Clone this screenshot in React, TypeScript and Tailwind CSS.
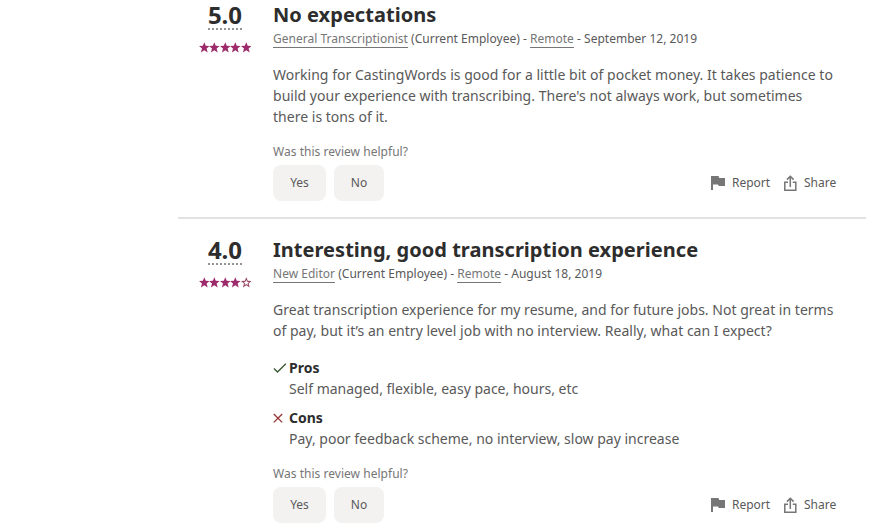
import type { ReactNode } from 'react';

type Review = {
  id: string;
  rating: number;
  title: string;
  role: string;
  location: string;
  date: string;
  // One entry per line of the review body.
  body: string[];
  pros?: string;
  cons?: string;
};

const REVIEWS: Review[] = [
  {
    id: 'no-expectations',
    rating: 5,
    title: 'No expectations',
    role: 'General Transcriptionist',
    location: 'Remote',
    date: 'September 12, 2019',
    body: [
      'Working for CastingWords is good for a little bit of pocket money. It takes patience to',
      "build your experience with transcribing. There's not always work, but sometimes",
      'there is tons of it.',
    ],
  },
  {
    id: 'interesting',
    rating: 4,
    title: 'Interesting, good transcription experience',
    role: 'New Editor',
    location: 'Remote',
    date: 'August 18, 2019',
    body: [
      'Great transcription experience for my resume, and for future jobs. Not great in terms',
      'of pay, but it’s an entry level job with no interview. Really, what can I expect?',
    ],
    pros: 'Self managed, flexible, easy pace, hours, etc',
    cons: 'Pay, poor feedback scheme, no interview, slow pay increase',
  },
];

export default function App() {
  return (
    <main className="h-[527px] overflow-hidden bg-white pl-[178px] pr-[13px] font-['Noto_Sans','Open_Sans',sans-serif] text-[#595959]">
      {REVIEWS.map((review) => (
        <ReviewCard key={review.id} review={review} />
      ))}
    </main>
  );
}

function ReviewCard({ review }: { review: Review }) {
  return (
    <article className="mb-4 flex border-b-2 border-[#e4e2e0] pb-4">
      <div className="flex w-[94px] shrink-0 flex-col items-center">
        <div className="h-[30px] border-b-2 border-dotted border-[#949494] text-2xl leading-[30px] font-bold text-[#2d2d2d]">
          {review.rating.toFixed(1)}
        </div>
        <Stars rating={review.rating} />
      </div>

      <div className="ml-px min-w-0 flex-1">
        <h2 className="text-xl leading-[30px] font-bold tracking-[0.03px] text-[#2d2d2d]">{review.title}</h2>
        <div className="text-xs leading-[18px] tracking-[0.015px] whitespace-nowrap">
          <MetaLink>{review.role}</MetaLink> (Current Employee) - <MetaLink>{review.location}</MetaLink> -{' '}
          {review.date}
        </div>

        <p className="mt-4 text-sm leading-[21px] tracking-[0.02px] whitespace-nowrap">
          {review.body.map((line) => (
            <span key={line} className="block">
              {line}
            </span>
          ))}
        </p>

        {review.pros && (
          <Verdict icon={<CheckIcon />} label="Pros" className="mt-4">
            {review.pros}
          </Verdict>
        )}
        {review.cons && (
          <Verdict icon={<CrossIcon />} label="Cons" className="mt-2">
            {review.cons}
          </Verdict>
        )}

        <div className="mt-4 text-xs leading-[18px] tracking-[0.03px] text-[#767676]">Was this review helpful?</div>
        <div className="mt-1 flex items-center justify-between pr-[29px] text-xs">
          <div className="flex gap-2">
            <button className="h-9 w-[53px] rounded-lg bg-[#f3f2f1]">Yes</button>
            <button className="h-9 w-[50px] rounded-lg bg-[#f3f2f1]">No</button>
          </div>
          <div className="flex items-center">
            <button className="flex items-center">
              <FlagIcon />
              <span className="ml-1.5 w-[39px] text-left">Report</span>
            </button>
            <button className="ml-[13px] flex items-center">
              <ShareIcon />
              <span className="ml-1.5 w-[33px] text-left">Share</span>
            </button>
          </div>
        </div>
      </div>
    </article>
  );
}

function MetaLink({ children }: { children: ReactNode }) {
  return (
    <a href="#" className="border-b border-[#767676] text-[#767676]">
      {children}
    </a>
  );
}

function Verdict({
  icon,
  label,
  className,
  children,
}: {
  icon: ReactNode;
  label: string;
  className: string;
  children: ReactNode;
}) {
  return (
    <div className={className}>
      <div className="flex items-center text-sm leading-[21px] font-bold text-[#2d2d2d]">
        <span className="w-4 shrink-0">{icon}</span>
        {label}
      </div>
      <div className="pl-4 text-sm leading-[21px] whitespace-nowrap">{children}</div>
    </div>
  );
}

const STAR_PATH = 'M5.5 0 7 3.8 11 4 7.9 6.6 9 10.6 5.5 8.4 2 10.6 3.1 6.6 0 4 4 3.8Z';

// The empty star is the same outline with a smaller one cut out of it.
const STAR_HOLE = 'M5.5 2.7 6.3 4.8 8.4 4.9 6.8 6.3 7.3 8.3 5.5 7.1 3.7 8.3 4.2 6.3 2.6 4.9 4.7 4.8Z';

function Stars({ rating }: { rating: number }) {
  return (
    <div className="mt-3 flex w-[53px]">
      {[1, 2, 3, 4, 5].map((n) => (
        <svg key={n} viewBox="0 0 11 11" className="h-[11px] min-w-0 flex-1">
          <path
            d={n <= rating ? STAR_PATH : `${STAR_PATH} ${STAR_HOLE}`}
            fill={n <= rating ? '#9d2b6b' : '#94405f'}
            fillRule="evenodd"
          />
        </svg>
      ))}
    </div>
  );
}

function CheckIcon() {
  return (
    <svg width="14" height="12" viewBox="0 0 14 12" fill="none" stroke="#3d5a35" strokeWidth="1.4">
      <path d="M1 6.5 4.5 10 12.8 1.8" />
    </svg>
  );
}

function CrossIcon() {
  return (
    <svg width="14" height="12" viewBox="0 0 14 12" fill="none" stroke="#963535" strokeWidth="1.3">
      <path d="M.8 2 9.2 10.4M9.2 2 .8 10.4" />
    </svg>
  );
}

function FlagIcon() {
  return (
    <svg width="15" height="14" viewBox="0 0 15 14" fill="#767676">
      <path d="M0 0H7.5L8.2 2H14V10H7.8L7 8.6H2V14H0Z" />
    </svg>
  );
}

function ShareIcon() {
  return (
    <svg width="14" height="16" viewBox="0 0 14 16" fill="none" stroke="#767676" strokeWidth="1.5">
      <path d="M4 7.2H.8V15.2H11.8V7.2H8.8" />
      <path d="M6.3 12V1.5M3 4.6 6.3 1.3 9.6 4.6" />
    </svg>
  );
}
